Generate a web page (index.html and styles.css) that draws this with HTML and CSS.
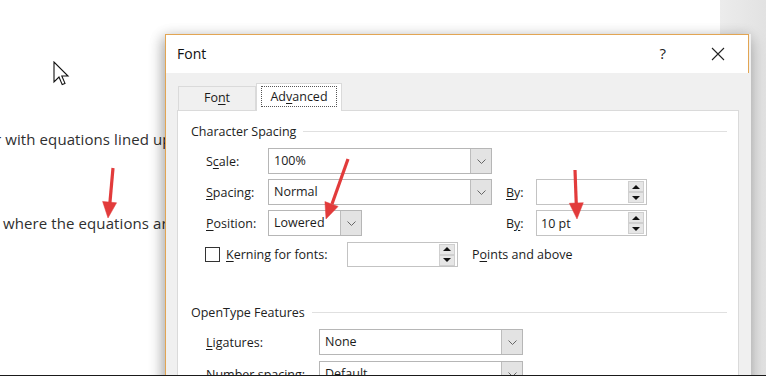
FILE: index.html
```html
<!DOCTYPE html>
<html>
<head>
<meta charset="utf-8">
<link rel="stylesheet" href="styles.css">
</head>
<body>
<div class="screen">
  <div class="doc">
    <p class="doc-line first">r with equations lined up on the same line</p>
    <p class="doc-line second">where the equations are aligned</p>
  </div>
  <div class="gutter"></div>

  <svg class="cursor" width="17" height="26" viewBox="0 0 17 26">
    <path d="M1 1 L1 21 L6 16 L9.2 23.6 L12 22.4 L8.8 15 L15 15 Z" fill="#fff" stroke="#111" stroke-width="1.1" stroke-linejoin="miter"/>
  </svg>

  <div class="dialog">
    <div class="titlebar">
      <span class="title">Font</span>
      <span class="help">?</span>
      <svg class="close" width="14" height="14" viewBox="0 0 14 14"><path d="M1 1 L13 13 M13 1 L1 13" stroke="#222" stroke-width="1.1"/></svg>
    </div>
    <div class="dbody">
      <div class="tabs">
        <div class="tab">Fo<u>n</u>t</div>
        <div class="tab active"><span class="focus">Ad<u>v</u>anced</span></div>
      </div>
      <div class="panel">
        <div class="group-head"><span>Character Spacing</span><i></i></div>
        <div class="grid">
          <label class="lbl">S<u>c</u>ale:</label>
          <div class="select wide"><span>100%</span><b class="dd"><svg width="9" height="5" viewBox="0 0 9 5"><path d="M0.5 0.5 L4.5 4.5 L8.5 0.5" fill="none" stroke="#666" stroke-width="1"/></svg></b></div>
          <span></span><span></span><span></span>

          <label class="lbl"><u>S</u>pacing:</label>
          <div class="select wide"><span>Normal</span><b class="dd"><svg width="9" height="5" viewBox="0 0 9 5"><path d="M0.5 0.5 L4.5 4.5 L8.5 0.5" fill="none" stroke="#666" stroke-width="1"/></svg></b></div>
          <span></span>
          <label class="lbl"><u>B</u>y:</label>
          <div class="spin"><span></span><div class="spinbtns"><b class="up"></b><b class="down"></b></div></div>

          <label class="lbl"><u>P</u>osition:</label>
          <div class="select narrow"><span>Lowered</span><b class="dd"><svg width="9" height="5" viewBox="0 0 9 5"><path d="M0.5 0.5 L4.5 4.5 L8.5 0.5" fill="none" stroke="#666" stroke-width="1"/></svg></b></div>
          <span></span>
          <label class="lbl">B<u>y</u>:</label>
          <div class="spin"><span>10 pt</span><div class="spinbtns"><b class="up"></b><b class="down"></b></div></div>
        </div>
        <div class="kern">
          <span class="check"></span>
          <label class="lbl kern-lbl"><u>K</u>erning for fonts:</label>
          <div class="spin"><span></span><div class="spinbtns"><b class="up"></b><b class="down"></b></div></div>
          <label class="lbl after">P<u>o</u>ints and above</label>
        </div>

        <div class="group-head second"><span>OpenType Features</span><i></i></div>
        <div class="ot">
          <label class="lbl"><u>L</u>igatures:</label>
          <div class="select ot-sel"><span>None</span><b class="dd"><svg width="9" height="5" viewBox="0 0 9 5"><path d="M0.5 0.5 L4.5 4.5 L8.5 0.5" fill="none" stroke="#666" stroke-width="1"/></svg></b></div>
          <label class="lbl">Number spacing:</label>
          <div class="select ot-sel"><span>Default</span><b class="dd"><svg width="9" height="5" viewBox="0 0 9 5"><path d="M0.5 0.5 L4.5 4.5 L8.5 0.5" fill="none" stroke="#666" stroke-width="1"/></svg></b></div>
        </div>
      </div>
    </div>
  </div>

  <svg class="arrows" width="766" height="376" viewBox="0 0 766 376">
    <g fill="#e23b3b" stroke="#e23b3b">
      <line x1="113" y1="168" x2="109.8" y2="204" stroke-width="3.2"/>
      <polygon points="108,218 116.6,202.8 102.6,201.4" stroke-width="0.5"/>
      <line x1="348" y1="159" x2="332" y2="204" stroke-width="3.2"/>
      <polygon points="326,219 338.1,206.4 324.9,201.6" stroke-width="0.5"/>
      <line x1="575" y1="170" x2="576.3" y2="205" stroke-width="3.2"/>
      <polygon points="577,219 583.3,202.7 569.3,203.3" stroke-width="0.5"/>
    </g>
  </svg>
  <div class="edge"></div>
</div>
</body>
</html>
```

FILE: styles.css
```css
html, body {
  margin: 0;
  padding: 0;
}
body {
  width: 766px;
  height: 376px;
  overflow: hidden;
  background: #fff;
}
.screen {
  position: relative;
  width: 766px;
  height: 376px;
  display: flex;
  overflow: hidden;
  font-family: "Open Sans", "Noto Sans", sans-serif;
}
.doc {
  width: 720px;
  background: #fff;
  padding-top: 127px;
  box-sizing: border-box;
  overflow: hidden;
}
.doc-line {
  margin: 0;
  font-size: 15px;
  line-height: 24px;
  color: #2f2f2f;
  white-space: nowrap;
  letter-spacing: 0.1px;
}
.doc-line.first {
  text-indent: -5px;
}
.doc-line.second {
  margin-top: 60px;
  padding-left: 3px;
}
.gutter {
  flex: 1;
  background: linear-gradient(to right, #ececec, #e2e2e2);
}
.cursor {
  position: absolute;
  left: 53px;
  top: 61px;
}
.arrows {
  position: absolute;
  left: 0;
  top: 0;
  pointer-events: none;
}
.edge {
  position: absolute;
  left: 0;
  right: 0;
  bottom: 0;
  height: 1px;
  background: #1a1a1a;
}

/* dialog */
.dialog {
  position: absolute;
  left: 165px;
  top: 34px;
  width: 586px;
  height: 360px;
  background: #f0f0f0;
  border-left: 1px solid #e2a553;
  box-sizing: border-box;
  box-shadow: 0 6px 16px rgba(0, 0, 0, 0.22), -3px 2px 12px rgba(0, 0, 0, 0.2);
  font-size: 12.5px;
  color: #1b1b1b;
}
.titlebar {
  height: 39px;
  margin-right: 2px;
  background: #fff;
  border-top: 1px solid #e2a553;
  border-right: 1px solid #e2a553;
  box-sizing: border-box;
  display: flex;
  align-items: center;
  padding-left: 11px;
}
.title {
  font-size: 14px;
  color: #111;
  flex: 1;
  padding-bottom: 2px;
}
.help {
  font-size: 15px;
  color: #222;
  margin-right: 45px;
  padding-bottom: 2px;
}
.close {
  margin-right: 23px;
}
.dbody {
  padding: 9px 0 0 11px;
}
.tabs {
  display: flex;
  align-items: flex-end;
  height: 28px;
  padding-left: 1px;
}
.tab {
  width: 78px;
  height: 24px;
  box-sizing: border-box;
  border: 1px solid #dadada;
  border-bottom: 0;
  text-align: center;
  line-height: 22px;
  background: #f0f0f0;
}
.tab.active {
  width: 86px;
  height: 28px;
  background: #fff;
  margin-bottom: -1px;
  position: relative;
  padding: 2px 4px 0;
  line-height: 20px;
}
.tab .focus {
  display: block;
  border: 1px dotted #555;
  height: 21px;
  box-sizing: border-box;
  line-height: 19px;
}
u {
  text-decoration: underline;
  text-underline-offset: 2px;
  text-decoration-thickness: 1px;
}
.panel {
  width: 562px;
  height: 280px;
  box-sizing: border-box;
  background: #fff;
  border: 1px solid #dadada;
  padding: 12px 11px 0 13px;
}
.group-head {
  display: flex;
  align-items: center;
  height: 17px;
  color: #222;
}
.group-head i {
  flex: 1;
  height: 1px;
  background: #e0e0e0;
  margin-left: 7px;
}
.group-head.second {
  margin-top: 37px;
}
.lbl {
  white-space: nowrap;
  color: #1b1b1b;
}
.grid {
  display: grid;
  grid-template-columns: 62px 224px 14px 30px 111px;
  grid-auto-rows: 26px;
  row-gap: 5px;
  align-items: center;
  margin: 8px 0 0 15px;
}
.select {
  height: 26px;
  box-sizing: border-box;
  border: 1px solid #b6b6b6;
  background: #fff;
  display: flex;
  align-items: stretch;
}
.select span {
  flex: 1;
  padding-left: 5px;
  line-height: 24px;
}
.select .dd {
  width: 20px;
  background: #e3e3e3;
  border-left: 1px solid #bdbdbd;
  display: flex;
  align-items: center;
  justify-content: center;
}
.select.narrow {
  width: 94px;
}
.spin {
  width: 111px;
  height: 26px;
  box-sizing: border-box;
  border: 1px solid #c3c3c3;
  background: #fff;
  display: flex;
  align-items: center;
}
.spin span {
  flex: 1;
  padding-left: 4px;
}
.spinbtns {
  display: flex;
  flex-direction: column;
  margin-right: 2px;
}
.spinbtns b {
  width: 16px;
  height: 11px;
  box-sizing: border-box;
  background: #e6e6e6;
  border: 1px solid #cfcfcf;
  display: flex;
  align-items: center;
  justify-content: center;
}
.spinbtns b::after {
  content: "";
  width: 0;
  height: 0;
  border-left: 4px solid transparent;
  border-right: 4px solid transparent;
}
.spinbtns .up::after {
  border-bottom: 4px solid #111;
}
.spinbtns .down::after {
  border-top: 4px solid #111;
}
.kern {
  display: flex;
  align-items: center;
  height: 25px;
  margin: 6px 0 0 14px;
}
.check {
  width: 15px;
  height: 15px;
  box-sizing: border-box;
  border: 1px solid #333;
  background: #fff;
  margin-right: 6px;
}
.kern-lbl {
  width: 121px;
}
.kern .spin {
  height: 25px;
}
.after {
  margin-left: 14px;
}
.ot {
  display: grid;
  grid-template-columns: 113px 204px;
  grid-auto-rows: 26px;
  row-gap: 6px;
  align-items: center;
  margin: 8px 0 0 15px;
}
```
